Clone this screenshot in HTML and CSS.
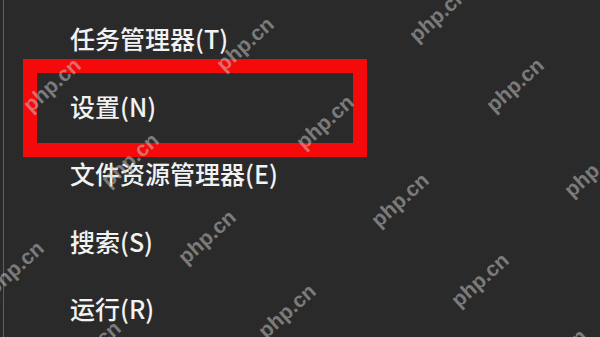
FILE: index.html
```html
<!DOCTYPE html>
<html lang="zh-CN">
<head>
    <meta charset="UTF-8">
    <meta name="viewport" content="width=device-width, initial-scale=1.0">
    <title>Win+X 菜单</title>
    <link rel="stylesheet" href="styles.css">
</head>
<body>

    <div class="screen">
        <ul class="menu">
            <li class="menu-item">任务管理器(T)</li>
            <li class="menu-item menu-item-marked">设置(N)</li>
            <li class="menu-item">文件资源管理器(E)</li>
            <li class="menu-item">搜索(S)</li>
            <li class="menu-item">运行(R)</li>
        </ul>

        <!-- watermark layer, filled by the script below -->
        <div class="watermarks" id="watermarks"></div>
    </div>

    <script>
        // centre points of each "php.cn" stamp
        const marks = [
            [52, 85], [130, 160], [207, 237], [287, 311],
            [245, 44], [325, 122], [400, 200], [480, 280], [558, 356],
            [438, 15], [515, 85], [593, 170],
            [15, 268], [92, 348]
        ];

        const layer = document.getElementById('watermarks');

        marks.forEach(([x, y]) => {
            const mark = document.createElement('span');
            mark.className = 'watermark';
            mark.textContent = 'php.cn';
            mark.style.left = x + 'px';
            mark.style.top = y + 'px';
            layer.appendChild(mark);
        });
    </script>

</body>
</html>
```

FILE: styles.css
```css
/* Win+X context menu, dark theme, with a red marker round "设置" */

html, body {
    margin: 0;
    padding: 0;
    height: 100%;
    overflow: hidden;
    background-color: #2a2a2a;
}

.screen {
    position: relative;
    height: 337px;
    padding-left: 3px;
    box-sizing: border-box;
    overflow: hidden;
}

.menu {
    margin: 0;
    height: 100%;
    list-style: none;
    padding: 5px 0 0 33px;
    border-left: 1px solid #5f5f5f; /* menu edge */
    box-sizing: border-box;
}

.menu-item {
    width: 316px;
    height: 67.5px;
    line-height: 67.5px;
    padding-left: 33px;
    box-sizing: border-box;
    font-family: "Noto Sans CJK SC", "Noto Sans", sans-serif;
    font-size: 25px;
    font-weight: 500;
    color: #f2f2f2;
    white-space: nowrap;
}

.menu-item-marked {
    position: relative;
}

/* the red marker drawn over the item */
.menu-item-marked::after {
    content: "";
    position: absolute;
    top: -13.5px;
    bottom: -17px;
    left: -14px;
    right: -14px;
    border: 14px solid #f40a0a;
    pointer-events: none;
}

/* --- watermark overlay --- */

.watermarks {
    position: absolute;
    inset: 0;
    pointer-events: none;
}

.watermark {
    position: absolute;
    transform: translate(-50%, -50%) rotate(-42deg);
    font-family: "Liberation Sans", Arial, sans-serif;
    font-weight: bold;
    font-size: 21px;
    color: rgba(205, 205, 205, 0.5);
    white-space: nowrap;
}
```
